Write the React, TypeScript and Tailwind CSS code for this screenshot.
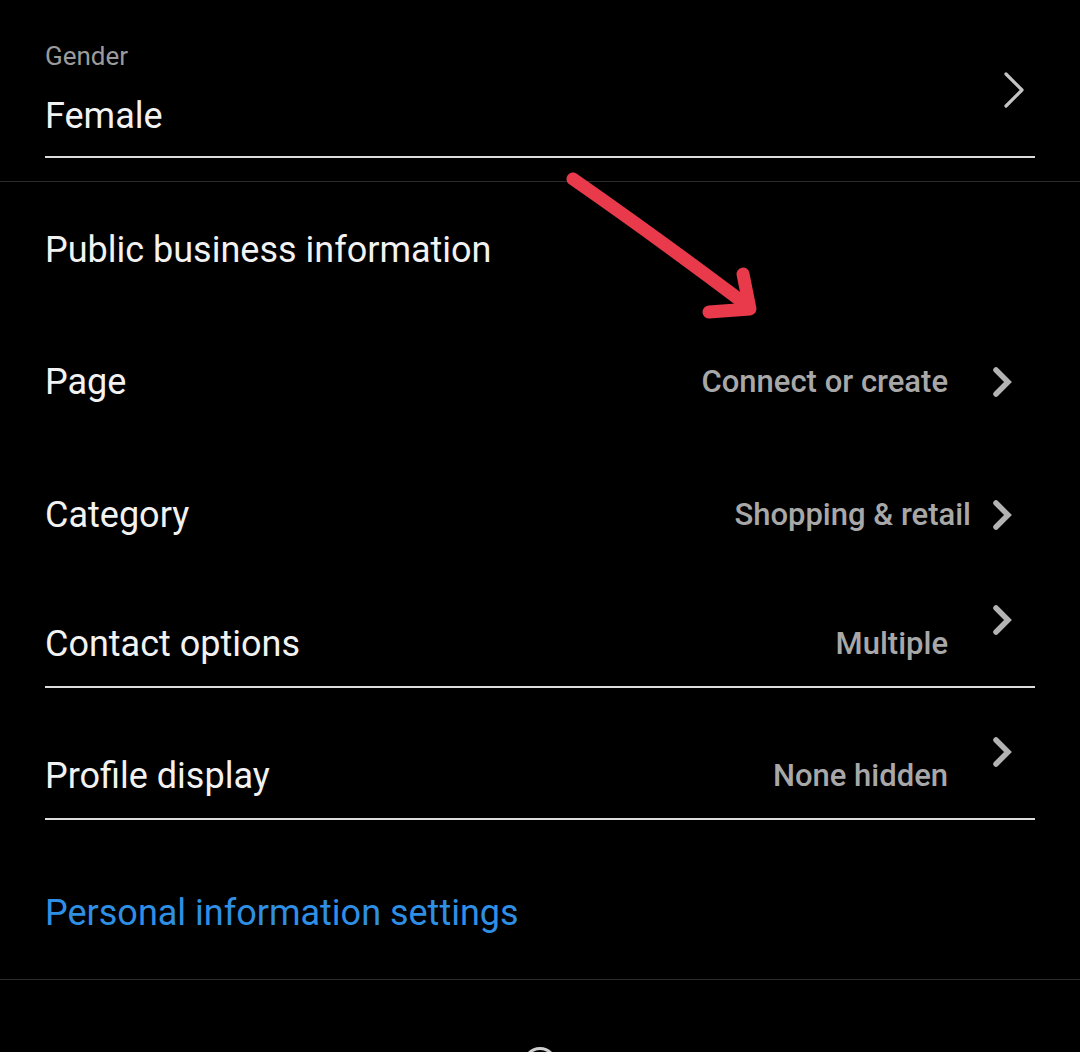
import React from 'react';

const Chevron: React.FC<{ thin?: boolean }> = ({ thin }) =>
  thin ? (
    <svg width="22" height="38" viewBox="0 0 22 38" className="shrink-0">
      <polyline points="3,3 19,19 3,35" fill="none" stroke="#c4c4c4" strokeWidth="3.2" strokeLinecap="round" strokeLinejoin="round" />
    </svg>
  ) : (
    <svg width="22" height="32" viewBox="0 0 22 32" className="shrink-0">
      <polyline points="5,4 17,16 5,28" fill="none" stroke="#b3b3b3" strokeWidth="5.5" strokeLinecap="round" strokeLinejoin="miter" />
    </svg>
  );

export default function App() {
  return (
    <div className="relative w-[1080px] h-[1052px] overflow-hidden bg-black text-[#f2f2f2] font-['Roboto','Liberation_Sans',sans-serif]">
      {/* gender field */}
      <div className="px-[45px] pt-[41px]">
        <div className="flex items-center justify-between border-b-2 border-[#dcdcdc] pb-[18px] pr-[10px]">
          <div className="flex flex-col">
            <span className="text-[26px] leading-[30px] text-[#9b9b9b]">Gender</span>
            <span className="mt-[23px] text-[36px] leading-[44px]">Female</span>
          </div>
          <Chevron thin />
        </div>
      </div>
      <div className="mt-[23px] h-px bg-[#2c2c2c]" />

      <div className="px-[45px]">
        <div className="mt-[46px] text-[36px] leading-[44px]">Public business information</div>

        <div className="mt-[88px] flex h-[44px] items-center justify-between pr-[22px]">
          <span className="text-[36px] leading-[44px]">Page</span>
          <div className="flex items-center gap-[43px]">
            <span className="text-[31px] font-medium text-[#a8a8a8]">Connect or create</span>
            <Chevron />
          </div>
        </div>

        <div className="mt-[89px] flex h-[44px] items-center justify-between pr-[22px]">
          <span className="text-[36px] leading-[44px]">Category</span>
          <div className="flex items-center gap-[20px]">
            <span className="text-[31px] font-medium text-[#a8a8a8]">Shopping &amp; retail</span>
            <Chevron />
          </div>
        </div>

        <div className="mt-[67px] flex items-end justify-between border-b-2 border-[#dcdcdc] pb-[20px] pr-[22px]">
          <span className="text-[36px] leading-[44px]">Contact options</span>
          <div className="flex items-start gap-[43px]">
            <span className="mt-[18px] text-[31px] leading-[44px] font-medium text-[#a8a8a8]">Multiple</span>
            <Chevron />
          </div>
        </div>

        <div className="mt-[48px] flex items-end justify-between border-b-2 border-[#dcdcdc] pb-[20px] pr-[22px]">
          <span className="text-[36px] leading-[44px]">Profile display</span>
          <div className="flex items-start gap-[43px]">
            <span className="mt-[18px] text-[31px] leading-[44px] font-medium text-[#a8a8a8]">None hidden</span>
            <Chevron />
          </div>
        </div>

        <div className="mt-[71px] text-[36px] leading-[44px] text-[#2e8fe4]">Personal information settings</div>
      </div>
      <div className="mt-[44px] h-px bg-[#2c2c2c]" />

      <div className="mt-[67px] flex justify-center">
        <div className="h-[34px] w-[34px] shrink-0 rounded-full border-[3px] border-[#cfcfcf]" />
      </div>

      {/* hand-drawn annotation arrow */}
      <svg className="pointer-events-none absolute left-0 top-0" width="1080" height="1052">
        <path d="M573 179 Q655 236 748 306" fill="none" stroke="#e83a4b" strokeWidth="13" strokeLinecap="round" />
        <path d="M743 274 L750 309 L709 312" fill="none" stroke="#e83a4b" strokeWidth="13" strokeLinecap="round" strokeLinejoin="round" />
      </svg>
    </div>
  );
}
